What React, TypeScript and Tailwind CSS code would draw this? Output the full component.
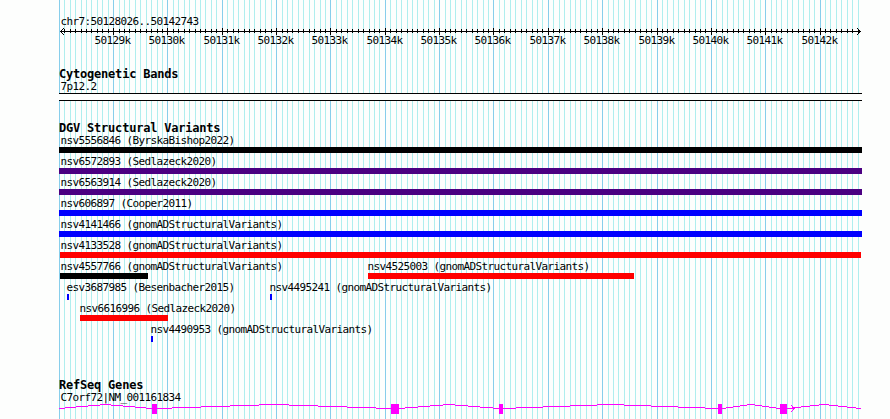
import React from 'react';

interface Feature {
  name: string;
  start: number;
  end: number;
  color: string;
}

// Pixel x of the left edge of the browser panel, and its width.
const LEFT = 59;
const WIDTH = 803;
const PX_PER_100BP = 5.434;

const lanes: Feature[][] = [
  [{ name: 'nsv5556846 (ByrskaBishop2022)', start: 59, end: 862, color: 'bg-black' }],
  [{ name: 'nsv6572893 (Sedlazeck2020)', start: 59, end: 862, color: 'bg-[#4b0082]' }],
  [{ name: 'nsv6563914 (Sedlazeck2020)', start: 59, end: 862, color: 'bg-[#4b0082]' }],
  [{ name: 'nsv606897 (Cooper2011)', start: 59, end: 862, color: 'bg-[#0000ff]' }],
  [{ name: 'nsv4141466 (gnomADStructuralVariants)', start: 59, end: 862, color: 'bg-[#0000ff]' }],
  [{ name: 'nsv4133528 (gnomADStructuralVariants)', start: 60, end: 861, color: 'bg-[#ff0000]' }],
  [
    { name: 'nsv4557766 (gnomADStructuralVariants)', start: 60, end: 148, color: 'bg-black' },
    { name: 'nsv4525003 (gnomADStructuralVariants)', start: 368, end: 634, color: 'bg-[#ff0000]' },
  ],
  [
    { name: 'esv3687985 (Besenbacher2015)', start: 67, end: 69, color: 'bg-[#0000ff]' },
    { name: 'nsv4495241 (gnomADStructuralVariants)', start: 270, end: 272, color: 'bg-[#0000ff]' },
  ],
  [{ name: 'nsv6616996 (Sedlazeck2020)', start: 80, end: 168, color: 'bg-[#ff0000]' }],
  [{ name: 'nsv4490953 (gnomADStructuralVariants)', start: 151, end: 153, color: 'bg-[#0000ff]' }],
];

const exons = [
  [152, 157],
  [391, 399],
  [499, 503],
  [718, 722],
  [780, 787],
];

const ticks = Array.from({ length: 148 }, (_, i) => ({
  x: Math.round(58.77 + i * PX_PER_100BP) - LEFT,
  major: i % 10 === 0,
  kb: 50128 + i / 10,
}));

const textClass =
  "font-['DejaVu_Sans_Mono',monospace] text-[11px] leading-[13px] tracking-[-0.622px] whitespace-pre";

const GridLines: React.FC = () => (
  <svg className="absolute left-0 top-0" width={WIDTH} height={419} shapeRendering="crispEdges">
    {ticks.map(t => (
      <rect key={t.x} x={t.x} y={0} width={1} height={419} fill={t.major ? '#87ceeb' : '#afeeee'} />
    ))}
  </svg>
);

const Axis: React.FC = () => (
  <svg className="block overflow-visible" width={WIDTH} height={19}>
    <g shapeRendering="crispEdges">
      <rect x={1} y={3} width={801} height={1} />
      {ticks.slice(1).map(t => (
        <rect key={t.x} x={t.x} y={t.major ? 0 : 1} width={1} height={t.major ? 7 : 4} />
      ))}
      {[1, 2, 3].map(d => (
        <React.Fragment key={d}>
          <rect x={1 + d} y={3 - d} width={1} height={1} />
          <rect x={1 + d} y={3 + d} width={1} height={1} />
          <rect x={801 - d} y={3 - d} width={1} height={1} />
          <rect x={801 - d} y={3 + d} width={1} height={1} />
        </React.Fragment>
      ))}
    </g>
    {ticks
      .filter(t => t.major && t.kb > 50128)
      .map(t => (
        <text key={t.kb} x={t.x - 18.4} y={16} className={textClass}>
          {`${t.kb}k`}
        </text>
      ))}
  </svg>
);

const TrackTitle: React.FC<{ children: React.ReactNode }> = ({ children }) => (
  <h2 className="h-[13px] pt-px font-['DejaVu_Sans_Mono',monospace] font-bold text-[12px] leading-[13px] tracking-[-0.21px]">
    {children}
  </h2>
);

const Lane: React.FC<{ features: Feature[] }> = ({ features }) => (
  <div className="flex h-[21px]">
    {features.map((f, i) => {
      const prevEnd = i === 0 ? LEFT : features[i - 1].end;
      const labelShift = Math.max(60.4, f.start - 0.5) - f.start;
      return (
        <div
          key={f.name}
          className="shrink-0"
          style={{ marginLeft: f.start - prevEnd, width: f.end - f.start }}
        >
          <div className={textClass} style={{ marginLeft: labelShift }}>
            {f.name}
          </div>
          <div className={`h-1.5 ${f.color}`} />
        </div>
      );
    })}
  </div>
);

const GeneModel: React.FC = () => {
  const anchors = [LEFT, ...exons.flat(), 861];
  let points = '';
  for (let i = 0; i < anchors.length; i += 2) {
    const a = anchors[i] - LEFT;
    const b = anchors[i + 1] - LEFT;
    points += `${a},4.5 ${(a + b) / 2},0.5 ${b},4.5 `;
  }
  return (
    <svg className="block" width={WIDTH} height={15} shapeRendering="crispEdges">
      <polyline points={points} fill="none" stroke="#ff00ff" strokeWidth={1} />
      {exons.map(([a, b]) => (
        <rect key={a} x={a - LEFT} y={0} width={b - a} height={10} fill="#ff00ff" />
      ))}
      <rect x={728} y={4} width={8} height={1} fill="#ff00ff" />
      {[1, 2, 3].map(d => (
        <React.Fragment key={d}>
          <rect x={735 - d} y={4 - d} width={1} height={1} fill="#ff00ff" />
          <rect x={735 - d} y={4 + d} width={1} height={1} fill="#ff00ff" />
        </React.Fragment>
      ))}
    </svg>
  );
};

const App: React.FC = () => {
  return (
    <div className="h-[419px] w-[890px] overflow-hidden bg-[#fdfefd] pl-[59px] text-black">
      <div className="relative h-full w-[803px]">
        <GridLines />
        <main className="relative pt-[15px]">
          <div className={`pl-[1.4px] ${textClass}`}>chr7:50128026..50142743</div>
          <Axis />

          <section className="pt-5">
            <TrackTitle>Cytogenetic Bands</TrackTitle>
            <div className={`pl-[1.4px] ${textClass}`}>7p12.2</div>
            <div className="h-2 border-y border-black bg-[#fdfefd]" />
          </section>

          <section className="pt-5">
            <TrackTitle>DGV Structural Variants</TrackTitle>
            {lanes.map((features, i) => (
              <Lane key={i} features={features} />
            ))}
          </section>

          <section className="pt-[34px]">
            <TrackTitle>RefSeq Genes</TrackTitle>
            <div className={`pl-[1.4px] ${textClass}`}>C7orf72|NM_001161834</div>
            <GeneModel />
          </section>
        </main>
      </div>
    </div>
  );
};

export default App;
